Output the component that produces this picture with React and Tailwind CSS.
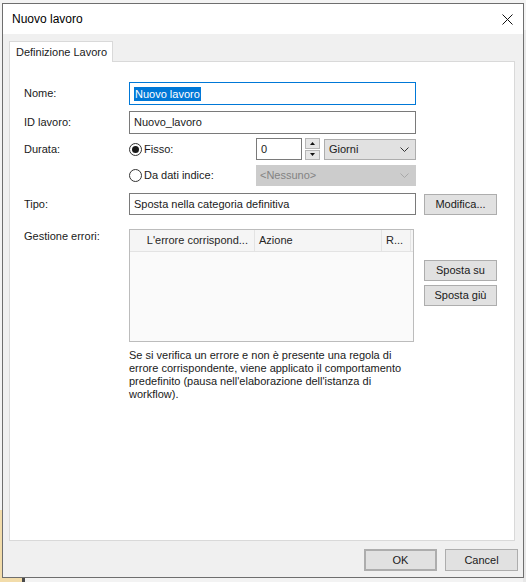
import React from 'react';

const font = { fontFamily: '"Liberation Sans", Arial, sans-serif' };

const Chevron = ({ color = '#333' }) => (
  <svg width="9" height="5" viewBox="0 0 9 5" className="shrink-0">
    <polyline points="0.5,0.5 4.5,4.5 8.5,0.5" fill="none" stroke={color} strokeWidth="1" />
  </svg>
);

const Radio = ({ checked, label }) => (
  <div className="flex items-center gap-[2px]">
    <div className="w-[13px] h-[13px] rounded-full border border-[#333] bg-white flex items-center justify-center">
      {checked && <div className="w-[7px] h-[7px] rounded-full bg-[#1a1a1a]" />}
    </div>
    <span>{label}</span>
  </div>
);

const Field = ({ children, focused, className = '' }) => (
  <div
    className={`h-full border bg-white flex items-center pl-[4px] ${focused ? 'border-[#0078d7]' : 'border-[#7a7a7a]'} ${className}`}
  >
    {children}
  </div>
);

const Btn = ({ children, className = '' }) => (
  <div className={`flex items-center justify-center bg-[#e1e1e1] border border-[#adadad] ${className}`}>
    {children}
  </div>
);

export default function App() {
  return (
    <div className="relative w-[526px] h-[582px] bg-[#f3f3f3] overflow-hidden text-[11px] text-[#1a1a1a]" style={font}>
      {/* bits of windows behind the dialog */}
      <div className="absolute left-0 top-[510px] w-[22px] h-[72px] bg-[#f2dcaa]" />
      <div className="absolute left-[22px] top-[578px] w-[3px] h-[4px] bg-[#4a4a4a]" />
      <div className="absolute left-[523px] top-[30px] w-[3px] h-[552px] bg-[#e8e8e8]" />

      <div className="relative ml-[2px] mt-[3px] w-[522px] h-[575px] border border-[#6e6e6e] bg-[#f0f0f0] flex flex-col">
        {/* title bar */}
        <div className="h-[30px] bg-white flex items-center pl-[9px] pr-[10px] shrink-0">
          <span className="text-[12px] text-black flex-1">Nuovo lavoro</span>
          <svg width="11" height="11" viewBox="0 0 11 11">
            <path d="M0.5 0.5 L10.5 10.5 M10.5 0.5 L0.5 10.5" stroke="#111" strokeWidth="1" />
          </svg>
        </div>

        {/* tabs */}
        <div className="pl-[6px] pt-[7px]">
          <div className="relative z-10 -mb-px w-[104px] h-[21px] bg-white border border-b-0 border-[#d9d9d9] flex items-center pl-[6px]">
            Definizione Lavoro
          </div>
          <div className="w-[506px] h-[480px] bg-white border border-[#d9d9d9] pl-[14px] pt-[20px]">
            {/* Nome */}
            <div className="flex items-center h-[23px]">
              <span className="w-[105px]">Nome:</span>
              <Field focused className="w-[287px]">
                <span className="bg-[#0078d7] text-white leading-[14px] px-px">Nuovo lavoro</span>
              </Field>
            </div>

            {/* ID */}
            <div className="flex items-center h-[23px] mt-[6px]">
              <span className="w-[105px]">ID lavoro:</span>
              <Field className="w-[287px]">Nuovo_lavoro</Field>
            </div>

            {/* Durata */}
            <div className="flex items-center h-[22px] mt-[4px]">
              <span className="w-[105px]">Durata:</span>
              <div className="w-[127px]">
                <Radio checked label="Fisso:" />
              </div>
              <Field className="w-[46px] pl-[3px]">0</Field>
              <div className="ml-[3px] w-[15px] h-[22px] flex flex-col gap-px">
                <div className="flex-1 bg-[#e6e6e6] border border-[#b5b5b5] flex items-center justify-center">
                  <svg width="5" height="3" viewBox="0 0 5 3"><polygon points="2.5,0 5,3 0,3" fill="#111" /></svg>
                </div>
                <div className="flex-1 bg-[#e6e6e6] border border-[#b5b5b5] flex items-center justify-center">
                  <svg width="5" height="3" viewBox="0 0 5 3"><polygon points="0,0 5,0 2.5,3" fill="#111" /></svg>
                </div>
              </div>
              <div className="ml-[4px] w-[92px] h-[21px] bg-[#e1e1e1] border border-[#adadad] flex items-center pl-[4px] pr-[6px]">
                <span className="flex-1">Giorni</span>
                <Chevron />
              </div>
            </div>

            {/* Da dati indice */}
            <div className="flex items-center h-[21px] mt-[5px]">
              <span className="w-[105px]" />
              <div className="w-[127px]">
                <Radio label="Da dati indice:" />
              </div>
              <div className="w-[160px] h-[21px] bg-[#cccccc] border border-[#cccccc] flex items-center pl-[3px] pr-[6px] text-[#838383]">
                <span className="flex-1">&lt;Nessuno&gt;</span>
                <Chevron color="#a8a8a8" />
              </div>
            </div>

            {/* Tipo */}
            <div className="flex items-center h-[22px] mt-[7px]">
              <span className="w-[105px]">Tipo:</span>
              <Field className="w-[287px]">Sposta nella categoria definitiva</Field>
              <Btn className="ml-[8px] w-[73px] h-[21px]">Modifica...</Btn>
            </div>

            {/* Gestione errori */}
            <div className="flex mt-[14px]">
              <span className="w-[105px] leading-[13px] pt-px">Gestione errori:</span>
              <div className="w-[285px] h-[113px] border border-[#bcbcbc] bg-[#fafafa] flex flex-col">
                <div className="flex h-[22px] bg-[#f5f5f5] border-b border-[#e3e3e3] items-center text-[#262626]">
                  <div className="w-[125px] h-full flex items-center justify-end pr-[6px] border-r border-[#e3e3e3]">
                    L'errore corrispond...
                  </div>
                  <div className="w-[127px] h-full flex items-center pl-[4px] border-r border-[#e3e3e3]">Azione</div>
                  <div className="w-[29px] h-full flex items-center pl-[4px] border-r border-[#e3e3e3]">R...</div>
                </div>
              </div>
              <div className="ml-[10px] pt-[31px] flex flex-col gap-[4px]">
                <Btn className="w-[73px] h-[21px]">Sposta su</Btn>
                <Btn className="w-[73px] h-[21px]">Sposta giù</Btn>
              </div>
            </div>

            <p className="ml-[105px] mt-[7px] leading-[13px]">
              Se si verifica un errore e non è presente una regola di
              <br />
              errore corrispondente, viene applicato il comportamento
              <br />
              predefinito (pausa nell'elaborazione dell'istanza di
              <br />
              workflow).
            </p>
          </div>
        </div>

        {/* footer buttons */}
        <div className="flex justify-end gap-[8px] pr-[5px] mt-[8px]">
          <Btn className="w-[73px] h-[22px] border-2 border-[#0078d7]">OK</Btn>
          <Btn className="w-[73px] h-[22px]">Cancel</Btn>
        </div>
      </div>
    </div>
  );
}
